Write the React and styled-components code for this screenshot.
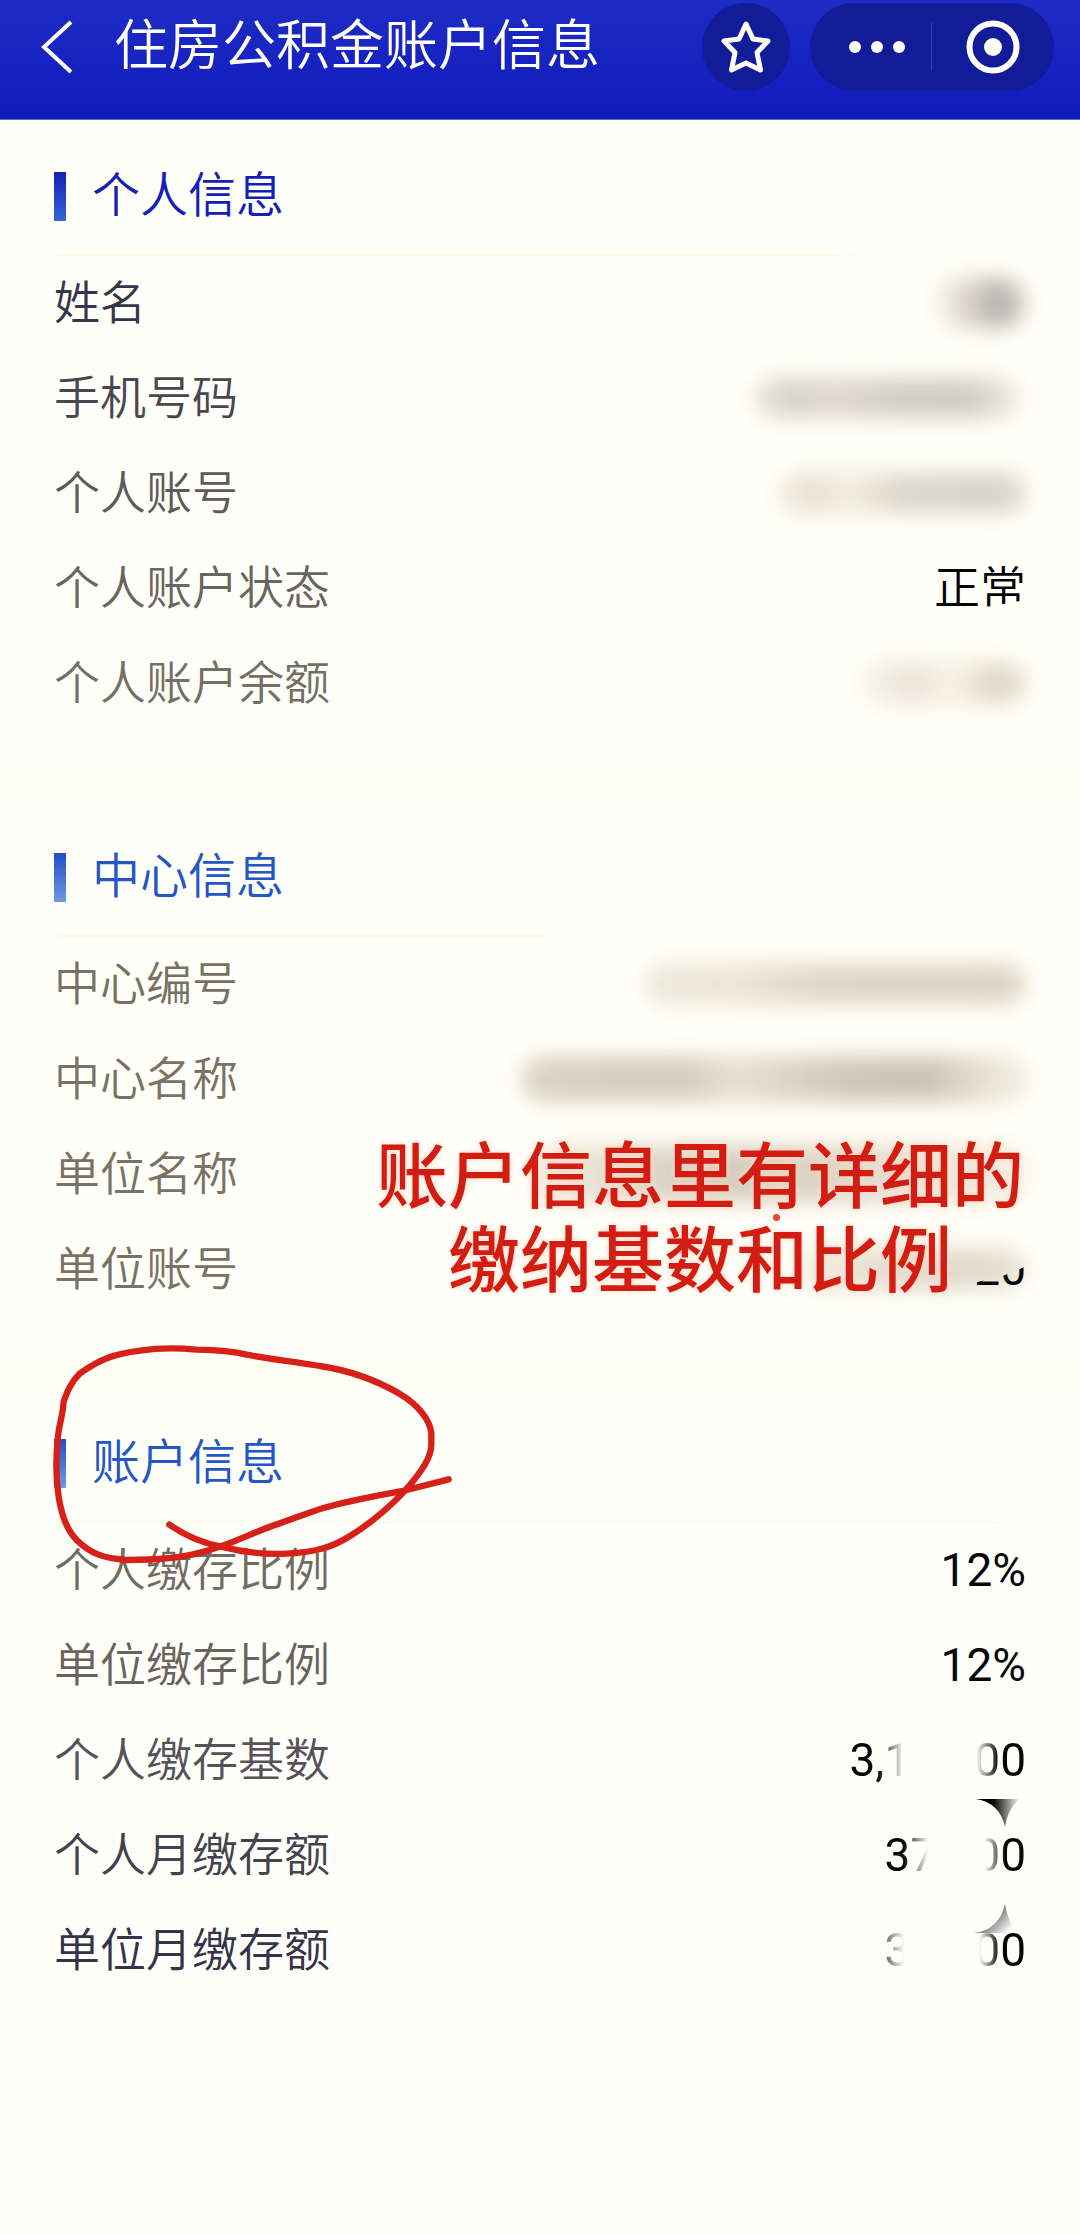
import React from "react"
import styled, { createGlobalStyle } from "styled-components"

const GlobalStyle = createGlobalStyle`
  body {
    -webkit-font-smoothing: antialiased;
    font-family: Roboto, "Noto Sans CJK SC", sans-serif;
    background-color: #fffffa;
    margin: 0;
  }
`

const Page = styled.div`
  background-color: #fffffa;
  min-height: 100vh;
`

const Header = styled.header`
  background-image: linear-gradient(#1d2cc4, #111bbd);
  border-bottom: 1px solid #4a74c8;
  box-sizing: border-box;
  padding: 2px 26px 28px 24px;
  align-items: center;
  display: flex;
  height: 120px;
`

const IconButton = styled.button`
  justify-content: center;
  align-items: center;
  background: none;
  color: #fffffa;
  display: flex;
  height: 88px;
  border: 0;
  padding: 0;
  width: ${({ $width }) => $width}px;
`

const StarButton = styled(IconButton)`
  background-color: #131c98;
  border-radius: 50%;
  margin-right: 20px;
`

const MoreButton = styled(IconButton)`
  padding-left: 12px;
`

const Title = styled.h1`
  font-weight: 350;
  font-size: 54px;
  line-height: 80px;
  color: #fffffa;
  flex: 1;
  margin: 0 0 0 24px;
`

const Capsule = styled.div`
  background-color: #131c98;
  border-radius: 44px;
  align-items: center;
  display: flex;
`

const CapsuleLine = styled.span`
  background-color: #3140b8;
  height: 48px;
  width: 1px;
`

const Section = styled.section`
  border-top: ${({ $first }) => ($first ? 0 : 28)}px solid #fffff3;
  padding: 0 54px 42px;
  position: relative;
`

const SectionHead = styled.div`
  border-bottom: 2px solid;
  border-image: linear-gradient(to right, #fffbe2 ${({ $line }) => $line - 4}%, transparent ${({ $line }) => $line}%) 1;
  box-sizing: border-box;
  align-items: center;
  padding-top: 18px;
  display: flex;
  height: 136px;
  gap: 26px;
`

const Bar = styled.span`
  background-image: linear-gradient(${({ $from }) => $from}, ${({ $to }) => $to});
  height: 49px;
  width: 12px;
`

const SectionTitle = styled.h2`
  color: ${({ $color }) => $color};
  font-weight: 350;
  font-size: 48px;
  line-height: 72px;
  margin: 0;
`

const Rows = styled.dl`
  margin: 0;
`

const Row = styled.div`
  justify-content: space-between;
  box-sizing: border-box;
  align-items: center;
  padding-bottom: 2px;
  display: flex;
  height: 95px;
`

const Label = styled.dt`
  color: ${({ $color }) => $color};
  font-weight: 350;
  font-size: 46px;
  line-height: 68px;
`

const Value = styled.dd`
  align-items: center;
  font-size: 46px;
  line-height: 68px;
  color: #050508;
  display: flex;
  margin: 0;
`

const Smudge = styled.span`
  background-image: linear-gradient(to right, ${({ $tones }) => $tones});
  height: ${({ $height }) => $height || 38}px;
  margin-right: -${({ $overlap }) => $overlap || 0}px;
  width: ${({ $width }) => $width}px;
  box-shadow: 0 0 12px 6px #fff6e6;
  border-radius: 24px;
  filter: blur(10px);
`

const Faded = styled.span`
  mask-image: linear-gradient(to ${({ $to }) => $to}, #000 ${({ $start }) => $start}%, transparent ${({ $end }) => $end}%);
`

const Gap = styled.span`
  width: ${({ $width }) => $width}px;
`

const CutDigits = styled.span`
  clip-path: polygon(0 71%, 55% 61%, 100% 47%, 100% 100%, 0 100%);
`

const CutStatus = styled.span`
  clip-path: polygon(0 0, 100% 0, 100% 68%, 50% 81%, 50% 100%, 0 100%);
  font-weight: 350;
`

const Note = styled.p`
  text-shadow: 0 0 6px #ffd9c4;
  position: absolute;
  text-align: center;
  font-weight: 500;
  font-size: 72px;
  line-height: 84px;
  color: #d41d12;
  right: 56px;
  top: 335px;
  margin: 0;
`

const Dot = styled.span`
  background-color: #e8483c;
  border-radius: 50%;
  position: absolute;
  height: 7px;
  width: 7px;
  right: 300px;
  top: 413px;
`

const Scribble = styled.svg`
  pointer-events: none;
  position: absolute;
  left: 30px;
  top: -67px;
`

const Shards = styled.svg`
  position: absolute;
  right: 52px;
  bottom: 105px;
`

const BackIcon = () => (
  <svg width="32" height="54" viewBox="0 0 32 54" fill="none" stroke="currentColor" strokeWidth="4">
    <path d="M30 2 L3 27 L30 52" />
  </svg>
)

const StarIcon = () => (
  <svg width="52" height="54" viewBox="0 0 52 54" fill="none" stroke="currentColor" strokeWidth="5" strokeLinejoin="round">
    <path d="M26 4 L33 19 L48 21 L37 32.500 L40.500 50 L26 43 L11.500 50 L15 32.500 L4 21 L19 19 Z" />
  </svg>
)

const MoreIcon = () => (
  <svg width="58" height="14" viewBox="0 0 58 14" fill="currentColor">
    <circle cx="7" cy="7" r="6" />
    <circle cx="29" cy="7" r="6" />
    <circle cx="51" cy="7" r="6" />
  </svg>
)

const TargetIcon = () => (
  <svg width="54" height="54" viewBox="0 0 54 54">
    <circle cx="27" cy="27" r="23.500" fill="none" stroke="currentColor" strokeWidth="6" />
    <circle cx="27" cy="27" r="9" fill="currentColor" />
  </svg>
)

const personal = [
  { label: "姓名", color: "#38354a", value: <Smudge $width={88} $height={48} $tones="#f6f0e6, #dcd4cb 35%, #b6b0ac 68%, #d8d1c9" /> },
  { label: "手机号码", color: "#4a4650", value: <><Smudge $width={262} $tones="#e9e3d8, #d9d2c7 15%, #e1dacd 30%, #d3cdc2 55%, #d3ccc1 82%, #f2ebdf" /><Gap $width={8} /></> },
  { label: "个人账号", color: "#5f5a58", value: <Smudge $width={246} $tones="#f2ebdf, #e9e2d4 14%, #f4eee0 28%, #ddd6ca 50%, #d9d2c7 88%, #e6dfd3" /> },
  { label: "个人账户状态", color: "#6b655d", value: <CutStatus>正常</CutStatus> },
  { label: "个人账户余额", color: "#757064", value: <Smudge $width={162} $tones="#fbf5e9, #eae3d6 30%, #faf3e6 55%, #ded7c8 80%, #e8e1d3" /> },
]

const center = [
  { label: "中心编号", color: "#79715f", value: <Smudge $width={380} $tones="#efe9dc, #ece5d7 25%, #dfd8c9 45%, #dcd5c6 94%, #e6dfd2" /> },
  { label: "中心名称", color: "#7a7262", value: <Smudge $width={504} $height={44} $tones="#dcd5c7, #d8d1c3 10%, #d6cfc1 33%, #e8e1d2 42%, #cfc8b9 65%, #cbc4b5 80%, #f0eadc 96%" /> },
  { label: "单位名称", color: "#7a7262", value: <Smudge $width={490} $height={54} $tones="#f2ecdf, #d3ccbf 35%, #ddd6c8 60%, #f6f1e5" /> },
  { label: "单位账号", color: "#7a7262", value: <><Smudge $width={220} $overlap={50} $tones="#f4eee2, #e2dbce 40%, #e0d9cb 75%, #e9e3d6" /><CutDigits>20</CutDigits></> },
]

const account = [
  { label: "个人缴存比例", color: "#716b60", value: "12%" },
  { label: "单位缴存比例", color: "#69635c", value: "12%" },
  {
    label: "个人缴存基数",
    color: "#57525a",
    value: <><Faded $to="right" $start={45} $end={90}>3,1</Faded><Gap $width={64} /><Faded $to="left" $start={52} $end={96}>00</Faded></>,
  },
  {
    label: "个人月缴存额",
    color: "#45414f",
    value: <><Faded $to="right" $start={35} $end={85}>37</Faded><Gap $width={38} /><Faded $to="left" $start={40} $end={80}>00</Faded></>,
  },
  {
    label: "单位月缴存额",
    color: "#35324a",
    value: <><Faded $to="right" $start={-40} $end={78}>3</Faded><Gap $width={64} /><Faded $to="left" $start={50} $end={90}>00</Faded></>,
  },
]

const InfoRows = ({ rows }) => (
  <Rows>
    {rows.map(({ label, color, value }) => (
      <Row key={label}>
        <Label $color={color}>{label}</Label>
        <Value>{value}</Value>
      </Row>
    ))}
  </Rows>
)

const App = () => {
  return (
    <Page>
      <GlobalStyle />
      <Header>
        <IconButton $width={66} aria-label="返回"><BackIcon /></IconButton>
        <Title>住房公积金账户信息</Title>
        <StarButton $width={88} aria-label="收藏"><StarIcon /></StarButton>
        <Capsule>
          <MoreButton $width={121} aria-label="更多"><MoreIcon /></MoreButton>
          <CapsuleLine />
          <IconButton $width={122} aria-label="关闭"><TargetIcon /></IconButton>
        </Capsule>
      </Header>
      <Section $first>
        <SectionHead $line={84}>
          <Bar $from="#161fb8" $to="#3566d4" />
          <SectionTitle $color="#1420b4">个人信息</SectionTitle>
        </SectionHead>
        <InfoRows rows={personal} />
      </Section>
      <Section>
        <SectionHead $line={54}>
          <Bar $from="#1f4fc8" $to="#6d9be0" />
          <SectionTitle $color="#2456c6">中心信息</SectionTitle>
        </SectionHead>
        <InfoRows rows={center} />
        <Note>账户信息里有详细的<br />缴纳基数和比例</Note>
        <Dot />
      </Section>
      <Section>
        <SectionHead $line={100}>
          <Bar $from="#1f4fc8" $to="#6d9be0" />
          <SectionTitle $color="#2456c6">账户信息</SectionTitle>
        </SectionHead>
        <InfoRows rows={account} />
        <Scribble width="450" height="300" viewBox="0 0 1350 900" fill="none" stroke="#d62018" strokeWidth="19" strokeLinecap="round">
          <path d="M418 614 C470 650 520 670 573 680 C640 697 700 704 770 701 C860 697 910 680 960 648 C1030 605 1080 560 1125 512 C1175 455 1206 410 1204 370 L1204 340 C1200 300 1165 255 1110 222 C1030 175 950 150 870 138 C800 125 720 118 650 104 C600 92 550 90 500 89 C430 82 380 84 330 92 C250 102 210 118 150 160 C120 190 110 220 101 245 C98 290 85 320 83 360 C77 420 78 480 86 530 C95 590 110 630 140 660 C180 700 220 715 290 720 C370 720 450 715 510 698 C600 675 640 650 720 620 C780 600 830 580 880 564 C960 540 1080 520 1130 510 L1256 478" />
        </Scribble>
        <Shards width="54" height="136" viewBox="0 0 54 136">
          <defs>
            <linearGradient id="shardTop">
              <stop offset="0.400" stopColor="#050508" />
              <stop offset="1" stopColor="#fffffa" />
            </linearGradient>
            <linearGradient id="shardBottom" x1="0" y1="0" x2="1" y2="0.600">
              <stop offset="0.300" stopColor="#3b3a48" />
              <stop offset="1" stopColor="#fffffa" />
            </linearGradient>
          </defs>
          <path d="M2 0 H46 Q34 9 31 28 Q26 4 2 0 Z" fill="url(#shardTop)" />
          <path d="M31 105 Q25 131 0 134 H44 Q34 124 31 105 Z" fill="url(#shardBottom)" />
        </Shards>
      </Section>
    </Page>
  )
}

export default App
